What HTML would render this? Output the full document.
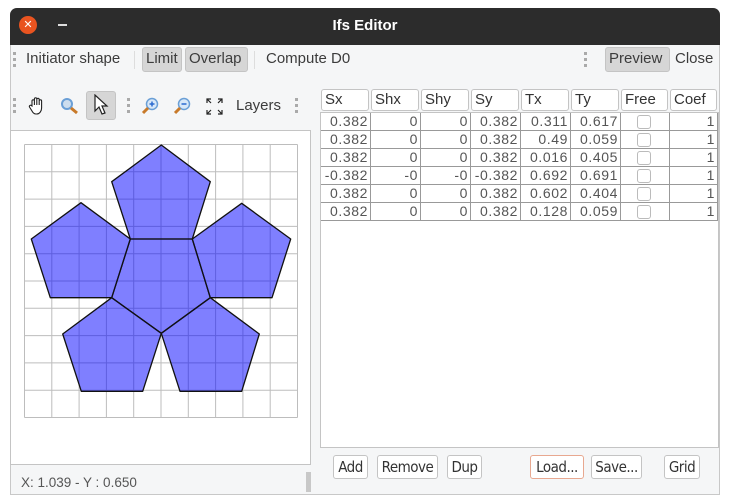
<!DOCTYPE html>
<html><head><style>
*{margin:0;padding:0;box-sizing:border-box}
body{width:730px;height:503px;background:#fff;position:relative;overflow:hidden;font-family:"Liberation Sans","DejaVu Sans",sans-serif;font-size:15px;color:#3c3c3c}
.abs{position:absolute}
.win{left:10px;top:8px;width:710px;height:487px;background:#f5f6f7;border:1px solid #c8c8c8;border-radius:7px 7px 0 0;overflow:hidden}
.title{left:10px;top:8px;width:710px;height:37px;background:#2c2c2c;border-radius:7px 7px 0 0}
.grip{width:3px;height:16px;background:repeating-linear-gradient(#aaa 0 3px,transparent 3px 6px)}
.tb{font-size:15px;color:#3c3c3c}
.btn{background:#d6d6d6;border:1px solid #c4c4c4;border-radius:3px}
.hdr{top:89px;height:22px;border:1px solid #c4c4c4;border-radius:3px;background:#fff;font-size:15px;padding:1px 3px;color:#333}
.cell{height:18px;border-right:1px solid #999;border-bottom:1px solid #999;text-align:right;padding-right:2px;font-size:14px;line-height:17px;color:#555;letter-spacing:.6px}
.pb{top:455px;height:24px;border:1px solid #c4c4c4;border-radius:3px;background:#fff;font-size:15px;text-align:center;line-height:22px;color:#333;font-family:"DejaVu Sans Condensed","Liberation Sans Narrow","Liberation Sans",sans-serif;letter-spacing:-.5px}
</style></head><body>
<div class="abs win"></div>
<div class="abs title"></div>
<div class="abs" style="left:19px;top:16px;width:18px;height:18px;border-radius:50%;background:#e95420;color:#fff;font-size:11px;text-align:center;line-height:18px">✕</div>
<div class="abs" style="left:58px;top:24px;width:9px;height:1.5px;background:#ddd"></div>
<div class="abs" style="left:0;width:730px;top:17px;text-align:center;color:#fff;font-weight:bold;font-size:15px">Ifs Editor</div>

<div class="abs grip" style="left:13px;top:52px"></div>
<div class="abs tb" style="left:26px;top:50px">Initiator shape</div>
<div class="abs" style="left:134px;top:51px;width:1px;height:18px;background:#ddd"></div>
<div class="abs btn" style="left:142px;top:47px;width:40px;height:25px"></div>
<div class="abs tb" style="left:146px;top:50px">Limit</div>
<div class="abs btn" style="left:185px;top:47px;width:63px;height:25px"></div>
<div class="abs tb" style="left:189px;top:50px">Overlap</div>
<div class="abs" style="left:254px;top:51px;width:1px;height:18px;background:#ddd"></div>
<div class="abs tb" style="left:266px;top:50px">Compute D0</div>
<div class="abs grip" style="left:584px;top:52px"></div>
<div class="abs btn" style="left:605px;top:47px;width:65px;height:25px"></div>
<div class="abs tb" style="left:609px;top:50px">Preview</div>
<div class="abs tb" style="left:675px;top:50px">Close</div>

<div class="abs grip" style="left:13px;top:98px"></div>
<svg class="abs" style="left:28px;top:96px" width="18" height="20" fill="#fff" stroke="#222" stroke-width="1.1"><path d="M4 10V5a1.2 1.2 0 0 1 2.4 0v4V3a1.2 1.2 0 0 1 2.4 0v6V3.5a1.2 1.2 0 0 1 2.4 0V9V5a1.2 1.2 0 0 1 2.4 0v7c0 3-2 6-5 6H8c-2 0-3-1-4-3L1.5 11a1.2 1.2 0 0 1 2-1.3Z"/></svg>
<svg class="abs" style="left:60px;top:97px" width="20" height="18"><circle cx="7" cy="7" r="5" fill="#cde" stroke="#6a9fd6" stroke-width="2"/><line x1="11" y1="11" x2="17" y2="16" stroke="#c87a2a" stroke-width="3"/></svg>
<div class="abs btn" style="left:86px;top:91px;width:30px;height:29px"></div>
<svg class="abs" style="left:93px;top:94px" width="16" height="22"><path d="M2 1 L2 17 L6 13 L9 20 L12 19 L9 12 L14 12 Z" fill="#fff" stroke="#222" stroke-width="1.2"/></svg>
<div class="abs grip" style="left:127px;top:98px"></div>
<svg class="abs" style="left:141px;top:97px" width="20" height="18"><circle cx="11" cy="7" r="5.5" fill="#d8e8f8" stroke="#6a9fd6" stroke-width="1.5"/><path d="M8.5 7h5M11 4.5v5" stroke="#2a6ad0" stroke-width="1.5"/><line x1="7" y1="11" x2="2" y2="16" stroke="#c87a2a" stroke-width="3"/></svg>
<svg class="abs" style="left:173px;top:97px" width="20" height="18"><circle cx="11" cy="7" r="5.5" fill="#d8e8f8" stroke="#6a9fd6" stroke-width="1.5"/><path d="M8.5 7h5" stroke="#2a6ad0" stroke-width="1.5"/><line x1="7" y1="11" x2="2" y2="16" stroke="#c87a2a" stroke-width="3"/></svg>
<svg class="abs" style="left:206px;top:98px" width="17" height="17" stroke="#222" stroke-width="1.2" fill="none"><path d="M1 5V1h4M1 1l4 4M16 5V1h-4M16 1l-4 4M1 12v4h4M1 16l4-4M16 12v4h-4M16 16l-4-4"/></svg>
<div class="abs tb" style="left:236px;top:97px">Layers</div>
<div class="abs grip" style="left:295px;top:98px"></div>

<div class="abs" style="left:10px;top:130px;width:301px;height:335px;background:#fff;border:1px solid #c4c4c4"></div>
<svg class="abs" style="left:0;top:0" width="320" height="470">
<g stroke="#bdbdbd" stroke-width="1">
<path d="M24.5 144.5V417.5M51.8 144.5V417.5M79.1 144.5V417.5M106.4 144.5V417.5M133.7 144.5V417.5M161 144.5V417.5M188.3 144.5V417.5M215.6 144.5V417.5M242.9 144.5V417.5M270.2 144.5V417.5M297.5 144.5V417.5"/>
<path d="M24.5 144.5H297.5M24.5 171.8H297.5M24.5 199.1H297.5M24.5 226.4H297.5M24.5 253.7H297.5M24.5 281H297.5M24.5 308.3H297.5M24.5 335.6H297.5M24.5 362.9H297.5M24.5 390.2H297.5M24.5 417.5H297.5"/>
</g>
<g fill="rgba(0,0,255,0.5)" stroke="#111" stroke-width="1.3" stroke-linejoin="round">
<path d="M161.3 145L210.3 181.7L192.3 239L130.3 239L111.7 181.7Z"/>
<path d="M130.3 239L192.3 239L210.3 297.7L161.3 333.3L111.7 297.7Z"/>
<path d="M81 202.7L130.3 239L111.7 297.7L50.3 297.7L31.3 239Z"/>
<path d="M241.7 203.3L290.7 239L272 297.7L210.3 297.7L192.3 239Z"/>
<path d="M111.7 297.7L161.3 333.3L142.7 391.3L81.3 391.3L62.7 334Z"/>
<path d="M210.3 297.7L259.3 334L241.7 391.3L180 391.3L161.3 333.3Z"/>
</g>
</svg>
<div class="abs" style="left:21px;top:475px;font-size:13.5px;color:#555">X: 1.039 - Y : 0.650</div>
<div class="abs" style="left:306px;top:472px;width:5px;height:20px;background:#c8c8c8"></div>

<div class="abs" style="left:320px;top:112px;width:399px;height:336px;background:#fff;border:1px solid #c4c4c4"></div>
<div class="abs hdr" style="left:321px;width:48px">Sx</div>
<div class="abs hdr" style="left:371px;width:48px">Shx</div>
<div class="abs hdr" style="left:421px;width:48px">Shy</div>
<div class="abs hdr" style="left:471px;width:48px">Sy</div>
<div class="abs hdr" style="left:521px;width:48px">Tx</div>
<div class="abs hdr" style="left:571px;width:48px">Ty</div>
<div class="abs hdr" style="left:621px;width:47px">Free</div>
<div class="abs hdr" style="left:670px;width:47px">Coef</div>
<div class="abs" style="left:321px;top:113px;display:grid;grid-template-columns:50px 50px 50px 50px 50px 50px 49px 48px">
<div class="cell">0.382</div><div class="cell">0</div><div class="cell">0</div><div class="cell">0.382</div><div class="cell">0.311</div><div class="cell">0.617</div><div class="cell"></div><div class="cell">1</div>
<div class="cell">0.382</div><div class="cell">0</div><div class="cell">0</div><div class="cell">0.382</div><div class="cell">0.49</div><div class="cell">0.059</div><div class="cell"></div><div class="cell">1</div>
<div class="cell">0.382</div><div class="cell">0</div><div class="cell">0</div><div class="cell">0.382</div><div class="cell">0.016</div><div class="cell">0.405</div><div class="cell"></div><div class="cell">1</div>
<div class="cell">-0.382</div><div class="cell">-0</div><div class="cell">-0</div><div class="cell">-0.382</div><div class="cell">0.692</div><div class="cell">0.691</div><div class="cell"></div><div class="cell">1</div>
<div class="cell">0.382</div><div class="cell">0</div><div class="cell">0</div><div class="cell">0.382</div><div class="cell">0.602</div><div class="cell">0.404</div><div class="cell"></div><div class="cell">1</div>
<div class="cell">0.382</div><div class="cell">0</div><div class="cell">0</div><div class="cell">0.382</div><div class="cell">0.128</div><div class="cell">0.059</div><div class="cell"></div><div class="cell">1</div>
</div>
<div class="abs" style="left:637px;top:115px;width:14px;height:14px;border:1px solid #bbb;border-radius:3px"></div>
<div class="abs" style="left:637px;top:133px;width:14px;height:14px;border:1px solid #bbb;border-radius:3px"></div>
<div class="abs" style="left:637px;top:151px;width:14px;height:14px;border:1px solid #bbb;border-radius:3px"></div>
<div class="abs" style="left:637px;top:169px;width:14px;height:14px;border:1px solid #bbb;border-radius:3px"></div>
<div class="abs" style="left:637px;top:187px;width:14px;height:14px;border:1px solid #bbb;border-radius:3px"></div>
<div class="abs" style="left:637px;top:205px;width:14px;height:14px;border:1px solid #bbb;border-radius:3px"></div>

<div class="abs pb" style="left:333px;width:35px">Add</div>
<div class="abs pb" style="left:377px;width:61px">Remove</div>
<div class="abs pb" style="left:447px;width:35px">Dup</div>
<div class="abs pb" style="left:530px;width:54px;border-color:#e8a890">Load...</div>
<div class="abs pb" style="left:591px;width:51px">Save...</div>
<div class="abs pb" style="left:664px;width:36px">Grid</div>
</body></html>
